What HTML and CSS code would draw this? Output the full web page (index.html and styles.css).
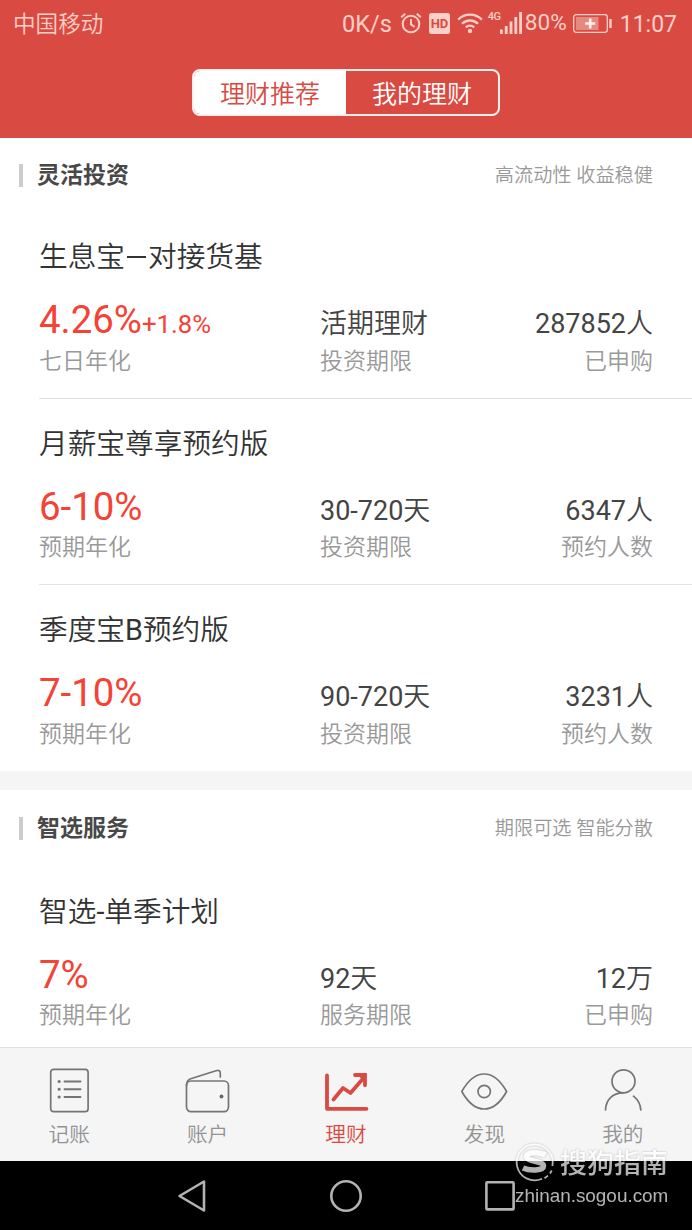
FILE: index.html
```
<!DOCTYPE html>
<html lang="zh-CN">

<head>
    <meta charset="UTF-8">
    <meta name="viewport" content="width=device-width, initial-scale=1.0">
    <title>理财</title>
    <link rel="stylesheet" href="styles.css">
</head>

<body>
    <header class="header">
        <div class="status">
            <span class="carrier">中国移动</span>
            <span class="speed">0K/s</span>
            <svg class="alarm" width="22" height="22" viewBox="0 0 22 22" fill="none" stroke="#fccfc8" stroke-width="2">
                <circle cx="11" cy="12" r="8.3" />
                <path d="M11 7v5.4l3.6 2.4M1.2 5.2l4-3.4M20.8 5.2l-4-3.4" />
            </svg>
            <svg class="hd" width="21" height="21" viewBox="0 0 21 21">
                <rect width="21" height="21" rx="2.5" fill="#fccfc8" />
                <text x="10.5" y="15.3" text-anchor="middle" class="hd-text">HD</text>
            </svg>
            <svg class="wifi" width="26" height="22" viewBox="0 0 26 22" fill="none" stroke="#fccfc8" stroke-width="2.3">
                <path d="M1.2 7.6a16.7 16.7 0 0 1 23.6 0M5 11.8a11.3 11.3 0 0 1 16 0M8.8 15.4a6 6 0 0 1 8.4 0" />
                <circle cx="13" cy="19" r="2.2" fill="#fccfc8" stroke="none" />
            </svg>
            <span class="net">4G</span>
            <svg class="signal" width="22" height="22" viewBox="0 0 22 22" fill="#fccfc8">
                <path d="M0 17.500h2.800V22H0zM4.800 14h2.800v8H4.800zM9.600 9.500h2.800V22H9.600zM14.400 5h2.800v17h-2.800zM19.200 0H22v22h-2.800z" />
            </svg>
            <span class="power">80%</span>
            <svg class="battery" width="39" height="19" viewBox="0 0 39 19">
                <rect x=".7" y=".7" width="33.600" height="17.600" rx="2.500" fill="none" stroke="#fccfc8" stroke-width="1.300" />
                <rect x="3" y="3" width="22.500" height="13" fill="#e58a80" />
                <path d="M17.200 4.500v10M12.200 9.500h10" stroke="#fff0ed" stroke-width="2.600" />
                <path d="M37.500 5v9" stroke="#fccfc8" stroke-width="2.400" />
            </svg>
            <span class="time">11:07</span>
        </div>
        <div class="tabs">
            <div class="tab active">理财推荐</div>
            <div class="tab">我的理财</div>
        </div>
    </header>

    <main class="content">
        <section class="group first">
            <div class="group-head">
                <h2>灵活投资</h2>
                <span>高流动性 收益稳健</span>
            </div>
            <div class="item">
                <h3>生息宝<i class="dash"></i>对接货基</h3>
                <div class="info">
                    <span class="rate">4.26%<small>+1.8%</small></span>
                    <span class="value">活期理财</span>
                    <span class="value"><b>287852</b>人</span>
                    <span class="label">七日年化</span>
                    <span class="label">投资期限</span>
                    <span class="label">已申购</span>
                </div>
            </div>
            <div class="item">
                <h3>月薪宝尊享预约版</h3>
                <div class="info">
                    <span class="rate">6-10%</span>
                    <span class="value"><b>30-720</b>天</span>
                    <span class="value"><b>6347</b>人</span>
                    <span class="label">预期年化</span>
                    <span class="label">投资期限</span>
                    <span class="label">预约人数</span>
                </div>
            </div>
            <div class="item">
                <h3>季度宝<b>B</b>预约版</h3>
                <div class="info">
                    <span class="rate">7-10%</span>
                    <span class="value"><b>90-720</b>天</span>
                    <span class="value"><b>3231</b>人</span>
                    <span class="label">预期年化</span>
                    <span class="label">投资期限</span>
                    <span class="label">预约人数</span>
                </div>
            </div>
        </section>

        <section class="group">
            <div class="group-head">
                <h2>智选服务</h2>
                <span>期限可选 智能分散</span>
            </div>
            <div class="item">
                <h3>智选<b>-</b>单季计划</h3>
                <div class="info">
                    <span class="rate">7%</span>
                    <span class="value"><b>92</b>天</span>
                    <span class="value"><b>12</b>万</span>
                    <span class="label">预期年化</span>
                    <span class="label">服务期限</span>
                    <span class="label">已申购</span>
                </div>
            </div>
        </section>
    </main>

    <nav class="menu">
        <div class="menu-item">
            <svg width="48" height="48" viewBox="0 0 48 48" fill="none" stroke="#757575" stroke-width="1.700">
                <rect x="5.700" y="3.300" width="37.400" height="42.400" rx="3" />
                <path d="M19.500 15.500h16M19.500 23.200h16M19.500 31h16" stroke-width="1.900" stroke-linecap="round" />
                <path d="M14.100 15.500h.1M14.100 23.200h.1M14.100 31h.1" stroke-width="3.100" stroke-linecap="round" />
            </svg>
            <span>记账</span>
        </div>
        <div class="menu-item">
            <svg width="48" height="48" viewBox="0 0 48 48" fill="none" stroke="#757575" stroke-width="1.700">
                <rect x="2.500" y="15" width="42" height="30.600" rx="4.500" />
                <path d="M2.500 19.500c0-4.500 2-6.200 5-7L32 4.700c3-.9 4.300 0 4.300 2.500V11" stroke-linecap="round" />
                <circle cx="37.500" cy="30.500" r="1.900" fill="#656565" stroke="none" />
            </svg>
            <span>账户</span>
        </div>
        <div class="menu-item current">
            <svg width="48" height="48" viewBox="0 0 48 48" fill="none" stroke="#d94b42" stroke-width="3.800" stroke-linecap="round" stroke-linejoin="round">
                <path d="M5 9.500v33.300h39.500" />
                <path d="M11.500 33.500L21 22l7.500 5L42 11.500" />
                <path d="M33 9h10v10.200" stroke-linejoin="miter" />
                <path d="M36 9h7v8z" fill="#d94b42" stroke="none" />
            </svg>
            <span>理财</span>
        </div>
        <div class="menu-item">
            <svg width="48" height="48" viewBox="0 0 48 48" fill="none" stroke="#757575" stroke-width="1.700">
                <path d="M1.800 25.500C8.500 13.500 16 8 24.200 8s15.700 5.500 22.400 17.500C40 37.500 32.400 43 24.200 43S8.500 37.500 1.800 25.500z" stroke-linejoin="round" />
                <circle cx="24.200" cy="25.500" r="6.200" />
            </svg>
            <span>发现</span>
        </div>
        <div class="menu-item">
            <svg width="48" height="48" viewBox="0 0 48 48" fill="none" stroke="#757575" stroke-width="1.700" stroke-linecap="round">
                <circle cx="24.500" cy="15.300" r="11.500" />
                <path d="M6.500 44C7 34 13.500 26.800 24 26.800M34.500 30.200c4.500 3.600 7 8.300 7.300 13.800" />
            </svg>
            <span>我的</span>
        </div>
    </nav>

    <footer class="keys">
        <svg width="34" height="34" viewBox="0 0 34 34">
            <path d="M4.500 17L29 2.500v29z" />
        </svg>
        <svg width="34" height="34" viewBox="0 0 34 34">
            <circle cx="17" cy="17" r="14.700" />
        </svg>
        <svg width="34" height="34" viewBox="0 0 34 34">
            <rect x="3.400" y="3.200" width="27.200" height="27.200" rx="1" />
        </svg>
    </footer>

    <div class="watermark">
        <div class="brand">
            <svg width="40" height="40" viewBox="0 0 40 40" fill="none" stroke="#fff">
                <path d="M27 36.800A18 18 0 1 1 37.300 24" stroke-width="1.800" />
                <path d="M29.500 36.200l3.500-2.600M35 31.500l1.800-3" stroke-width="1.800" />
                <path d="M30.500 13c-5-3-19-3.500-19 1.500 0 5.500 17 4 17 9.500 0 5-14 5-20.500 2" stroke-width="5.500" />
            </svg>
            <span>搜狗指南</span>
        </div>
        <div class="site">zhinan.sogou.com</div>
    </div>
</body>

</html>
```
FILE: styles.css
```
* {
    box-sizing: border-box;
}

body {
    margin: 0;
    width: 692px;
    height: 1230px;
    display: flex;
    flex-direction: column;
    position: relative;
    overflow: hidden;
    background-color: #fff;
    font-family: Roboto, "Noto Sans CJK SC", sans-serif;
    font-weight: 350;
}

h2,
h3 {
    margin: 0;
}

b {
    font-weight: 400;
}

.header {
    height: 138px;
    flex-shrink: 0;
    background-color: #d94b42;
}

/* status bar */
.status {
    height: 46px;
    padding: 0 15px 0 13px;
    display: flex;
    align-items: center;
    color: #fccfc8;
    font-size: 22.6px;
    line-height: 46px;
    white-space: nowrap;
}

.carrier {
    margin-right: auto;
    padding-top: 3px;
}

.speed {
    padding-top: 2px;
    font-size: 23.5px;
}

.speed,
.power,
.time {
    font-weight: 400;
}

.alarm {
    margin-left: 8px;
}

.hd {
    margin-left: 7px;
}

.hd-text {
    font-size: 13px;
    font-weight: 700;
    fill: #d94b42;
}

.wifi {
    margin-left: 7px;
}

.net {
    margin-left: 5px;
    width: 12px;
    font-size: 11px;
    font-weight: 500;
    letter-spacing: -0.5px;
    line-height: 12px;
    padding-bottom: 12px;
}

.signal {
    margin-left: 0;
}

.power {
    margin-left: 3px;
}

.battery {
    margin-left: 6px;
}

.time {
    margin-left: 8px;
    padding-top: 3px;
    font-size: 23px;
}

/* top switch */
.tabs {
    width: 308px;
    height: 47px;
    margin: 22.5px auto 0;
    display: flex;
    border: 2px solid #fff0ed;
    border-radius: 8px;
    overflow: hidden;
}

.tab {
    flex: 1;
    text-align: center;
    color: #fff;
    font-size: 25px;
    line-height: 47px;
}

.tab.active {
    background-color: #fff;
    color: #d94b42;
}

/* product list */
.content {
    flex: 1;
    min-height: 0;
    overflow: hidden;
}

.group {
    border-top: 19px solid #f5f5f5;
}

.group.first {
    border-top: none;
}

.group-head {
    height: 77px;
    padding: 0 39px 0 19px;
    display: flex;
    align-items: center;
    justify-content: space-between;
}

.first .group-head {
    height: 74px;
}

.group-head h2 {
    padding-left: 14px;
    border-left: 4px solid #ccc;
    color: #484848;
    font-size: 23px;
    font-weight: 700;
    line-height: 23px;
}

.group-head span {
    padding-bottom: 2px;
    color: #999;
    font-size: 19.2px;
}

.item {
    height: 186.500px;
    margin-left: 39px;
    padding: 25px 39px 0 0;
    border-bottom: 1px solid #e3e3e3;
}

.item:last-child {
    height: 185.500px;
    border-bottom: none;
}

.item h3 {
    color: #333;
    font-size: 28.7px;
    font-weight: 350;
    line-height: 40px;
}

.dash {
    display: inline-block;
    width: 19px;
    height: 2px;
    margin: 0 2px;
    background-color: #333;
    vertical-align: 9px;
}

.info {
    height: 98px;
    display: grid;
    grid-template-columns: 281px 1fr 1fr;
    grid-template-rows: 69.5px 30px;
    align-items: baseline;
    white-space: nowrap;
}

.info span:nth-child(3n) {
    text-align: right;
}

.rate {
    color: #f44236;
    font-size: 38.4px;
    font-weight: 400;
    line-height: 85px;
}

.rate small {
    font-size: 25.7px;
}

.value {
    color: #444;
    font-size: 27px;
}

.label {
    color: #999;
    font-size: 23px;
    line-height: 30px;
}

/* bottom menu */
.menu {
    height: 114px;
    flex-shrink: 0;
    display: flex;
    background-color: #f5f5f5;
    border-top: 1px solid #e0e0e0;
}

.menu-item {
    flex: 1;
    padding-top: 18px;
    display: flex;
    flex-direction: column;
    align-items: center;
    color: #939393;
    font-size: 20.7px;
    line-height: 43px;
}

.menu-item.current {
    color: #d94b42;
}

.keys {
    height: 69px;
    flex-shrink: 0;
    display: flex;
    align-items: center;
    justify-content: center;
    gap: 120px;
    background-color: #000;
}

.keys svg {
    fill: none;
    stroke: #b3b3b3;
    stroke-width: 2.6;
    stroke-linejoin: round;
}

.watermark {
    position: absolute;
    left: 515px;
    top: 1141px;
    color: #fff;
    opacity: 0.7;
}

.brand {
    display: flex;
    align-items: center;
    gap: 5px;
    height: 41px;
    font-size: 27px;
    font-weight: 500;
    filter: drop-shadow(0 0 1px rgba(0, 0, 0, 0.35));
}

.site {
    font-family: "Liberation Sans", sans-serif;
    font-size: 18.9px;
    font-weight: 400;
    line-height: 27px;
}
```
